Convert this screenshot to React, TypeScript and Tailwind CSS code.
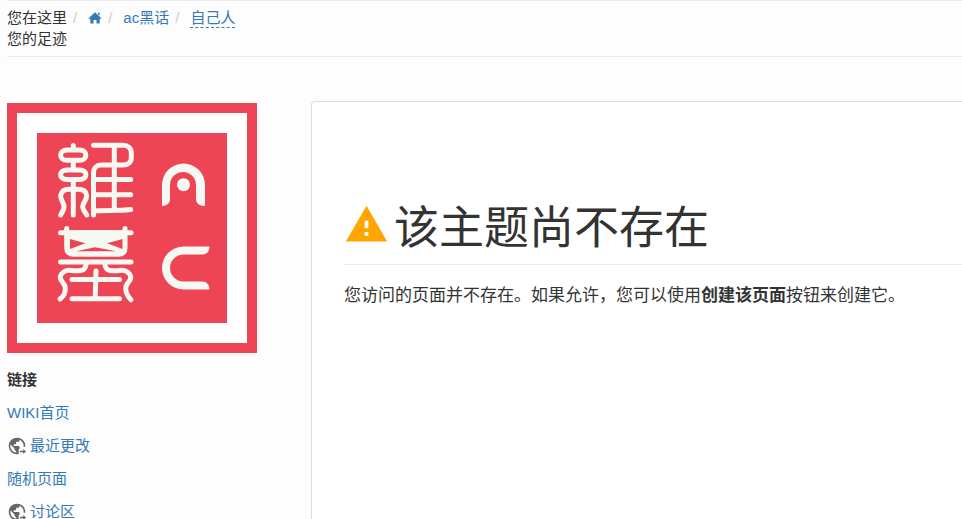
import { useId } from 'react';

const link = 'text-[#337ab7] hover:underline';

function HomeIcon() {
  return (
    <svg viewBox="0 0 14 14" className="h-[14px] w-[14px]" fill="currentColor" aria-hidden="true">
      <path d="M7 1.2 13.4 7.3q.3.5-.3.5H11.7V12q0 .6-.6.6H8.5V9H5.5v3.6H2.9q-.6 0-.6-.6V7.8H.9q-.6 0-.3-.5L7 1.2ZM10 1.7h1.6v3L10 3.2Z" />
    </svg>
  );
}

function GlobeIcon() {
  const maskId = useId();
  return (
    <svg viewBox="0 0 24 24" className="h-5 w-5" fill="#666" aria-hidden="true">
      <mask id={maskId}>
        <rect width="24" height="24" fill="#fff" />
        <path d="M14 15.500h5V13h5v9H14Z" fill="#000" />
      </mask>
      <path
        mask={`url(#${maskId})`}
        d="M12 2a10 10 0 1 0 0 20 10 10 0 0 0 0-20Zm-1 17.930C7.050 19.440 4 16.080 4 12c0-.62.080-1.210.21-1.790L9 15v1c0 1.100.9 2 2 2v1.930Zm6.900-2.540C17.640 16.580 16.900 16 16 16h-1v-3c0-.55-.45-1-1-1H8v-2h2c.55 0 1-.45 1-1V7h2c1.100 0 2-.9 2-2v-.41c2.930 1.190 5 4.060 5 7.410 0 2.080-.8 3.970-2.100 5.390Z"
      />
      <path d="M19.500 15.500 22.800 18.500 19.500 21.500V19.400h-4v-1.800h4Z" />
    </svg>
  );
}

function Logo() {
  return (
    <svg viewBox="0 0 250 250" className="block h-[250px] w-[250px]" role="img" aria-label="Wiki">
      <rect width="250" height="250" fill="#ed4556" />
      <rect x="10" y="10" width="230" height="230" fill="#fff" />
      <rect x="30" y="30" width="190" height="190" fill="#ed4556" />
      <g fill="none" stroke="#f6f9f1" strokeWidth="5" strokeLinecap="round" strokeLinejoin="round">
        <path d="M66.300 42.500V47M60 47h12.500c8.500 0 8.500 10.300 0 10.300H60c-8.500 0-8.500-10.300 0-10.300ZM66.300 57.300V67M60 67h12.500c8.500 0 8.500 9.500 0 9.500H60c-8.500 0-8.500-9.500 0-9.500ZM66.300 76.500V112" />
        <path d="M53.700 112c1-3 3.500-4.500 3.300-8.300C57 99 53 97 53.700 92.500c.8-4 3.500-6.200 8-6.200h9c5 0 8.500 2.200 9 6.200.3 4.500-4 6.500-4 11.200 0 3.800 3 5.300 4 8.300" />
        <path d="M86.500 42.300H116c5 0 8.300 3 8.300 7.500v5c0 4.500-3.300 7.300-8.300 7.300H94c-4.500 0-7.500 3-7.500 7.500V112M107.300 42.300V107M86.500 76.500h37.200M86.500 91.700h37.200M86.500 108c12-1 25 0 37.200-1.500" />
        <path d="M59.700 129.700h58.300V145c0 4-2.500 6.300-6.500 6.300h-45c-4 0-6.800-2.300-6.800-6.300Z" fill="#f6f9f1" />
        <path d="M53.500 129.700h70.500M59.700 125.500v5M118 125.500v5M53.500 159h70.500" />
        <path d="M79 162c-1.500 6.500-5.500 5.700-10 5.700-7 0-10-2-14.500 3.300-4.500 6 4 8.500 3.800 14.300 0 5.700-1.500 7.700-5.300 10.700M98 162c1.500 6.500 5.500 5.700 10 5.700 7 0 10-2 14.500 3.300 4.500 6-4 8.500-3.800 14.300 0 5.700 2 8.200 5.300 11.400M65 176.500h47.500M65 195.700h47.500M89 168l-.8 27" />
      </g>
      <path d="M63 136l15.500 4.300L63 146ZM115.500 136l-15.500 4.300 15.500 5.700ZM69 148.200l19-4 21.500 4Z" fill="#ed4556" />
      <g fill="#f6f9f1">
        <path d="M155 103V82a21.500 21.500 0 0 1 43 0v21c-6 0-9-3-9-7V82a12.500 12.500 0 0 0-26 0v14c0 4-3 7-8 7Z" />
        <circle cx="176.500" cy="81.700" r="6.500" />
        <path d="M202.500 143.500h-26a21.500 21.500 0 0 0 0 43h26c0-5-3-8-7-8h-19a13.500 13.500 0 0 1 0-27h19c4 0 7-3 7-8Z" />
      </g>
    </svg>
  );
}

function WarningIcon() {
  return (
    <svg viewBox="0 0 24 24" className="h-[45px] w-[45px] shrink-0" fill="#ffa500" aria-hidden="true">
      <path d="M13 14h-2v-4h2m0 8h-2v-2h2M1 21h22L12 2 1 21Z" />
    </svg>
  );
}

function Separator() {
  return <span className="px-[6px] text-[#ccc]" aria-hidden="true">/</span>;
}

export default function App() {
  return (
    <div className="h-screen overflow-hidden bg-[#fdfdfd] pl-[7px] font-['Liberation_Sans','Noto_Sans_CJK_SC',sans-serif] text-[15px] leading-[21px] text-[#333]">
      <nav aria-label="您在这里" className="border-y border-[#eee] pt-[6px] pb-[7px]">
        <ol className="flex items-center">
          <li>您在这里</li>
          <li className="flex items-center">
            <Separator />
            <a href="#home" aria-label="首页" className="ml-[5px] text-[#337ab7]"><HomeIcon /></a>
          </li>
          <li className="flex items-center">
            <Separator />
            <a href="#ac" className={`${link} ml-[5px]`}>ac黑话</a>
          </li>
          <li className="flex items-center">
            <Separator />
            <a href="#self" className="ml-[5px] border-b border-dashed border-[#337ab7] leading-[19px] text-[#337ab7]">自己人</a>
          </li>
        </ol>
        <div>您的足迹</div>
      </nav>

      <div className="flex pt-11">
        <aside className="w-[304px] shrink-0 pt-[2px]">
          <Logo />
          <h2 className="mt-4 font-bold">链接</h2>
          <ul className="mt-3 flex flex-col gap-3">
            <li><a href="#wiki" className={link}>WIKI首页</a></li>
            <li><a href="#recent" className={`${link} flex items-center gap-[3px]`}><GlobeIcon />最近更改</a></li>
            <li><a href="#random" className={link}>随机页面</a></li>
            <li><a href="#forum" className={`${link} flex items-center gap-[3px]`}><GlobeIcon />讨论区</a></li>
          </ul>
        </aside>

        <main className="min-h-screen min-w-0 flex-1 rounded-tl border-t border-l border-[#ddd] bg-white pt-[100px] pl-8">
          <h1 className="flex items-start gap-[5px] border-b border-[#eee] pb-2 text-[45px] leading-[54px]">
            <WarningIcon />
            该主题尚不存在
          </h1>
          <p className="mt-[19px] text-[17px] leading-6">
            您访问的页面并不存在。如果允许，您可以使用<strong>创建该页面</strong>按钮来创建它。
          </p>
        </main>
      </div>
    </div>
  );
}
